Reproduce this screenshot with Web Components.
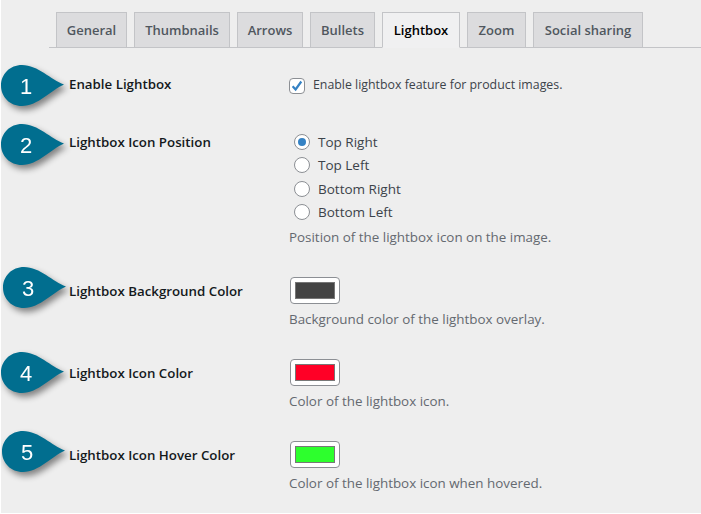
<!DOCTYPE html>
<html><head><meta charset="utf-8">
<style>
html,body{margin:0;padding:0;background:#fff}
body{width:701px;height:514px;overflow:hidden;font-family:"Open Sans","Noto Sans",sans-serif}
</style></head><body>
<settings-page>
  <tab-bar>
    <tab-item style="width:71px">General</tab-item><tab-item style="width:96px">Thumbnails</tab-item><tab-item style="width:66px">Arrows</tab-item><tab-item style="width:65px">Bullets</tab-item><tab-item active style="width:78px">Lightbox</tab-item><tab-item style="width:59px">Zoom</tab-item><tab-item style="width:110px">Social sharing</tab-item>
  </tab-bar>
  <setting-row label="Enable Lightbox" n="1" pin-x="1" pin-y="-9" style="height:58px">
    <check-field>Enable lightbox feature for product images.</check-field>
  </setting-row>
  <setting-row label="Lightbox Icon Position" n="2" pin-x="1" pin-y="-8" style="height:138px">
    <radio-list>
      <radio-field checked>Top Right</radio-field><radio-field>Top Left</radio-field><radio-field>Bottom Right</radio-field><radio-field>Bottom Left</radio-field>
    </radio-list>
    <field-desc style="margin-top:3.700px">Position of the lightbox icon on the image.</field-desc>
  </setting-row>
  <setting-row label="Lightbox Background Color" n="3" pin-x="3" pin-y="-3" style="height:82px" swatch-row>
    <color-swatch color="#444444"></color-swatch>
    <field-desc>Background color of the lightbox overlay.</field-desc>
  </setting-row>
  <setting-row label="Lightbox Icon Color" n="4" pin-x="1" pin-y="0" style="height:82px" swatch-row>
    <color-swatch color="#ff0026"></color-swatch>
    <field-desc>Color of the lightbox icon.</field-desc>
  </setting-row>
  <setting-row label="Lightbox Icon Hover Color" n="5" pin-x="2" pin-y="-3" style="height:72px" swatch-row>
    <color-swatch color="#2dff2d"></color-swatch>
    <field-desc>Color of the lightbox icon when hovered.</field-desc>
  </setting-row>
</settings-page>
<script>
function def(name, css, html){
  customElements.define(name, class extends HTMLElement{
    constructor(){super();const r=this.attachShadow({mode:'open'});r.innerHTML='<style>'+css+'</style>'+(typeof html==='function'?html(this):html);}
  });
}
def('settings-page',
 ':host{display:flex;flex-direction:column;box-sizing:border-box;width:700px;height:513px;margin-left:1px;background:#eeeeee;padding-top:12px;color:#1d2327}',
 '<slot></slot>');
def('tab-bar',
 ':host{display:flex;gap:7px;height:36px;box-sizing:border-box;margin-left:48px;padding-left:7px;border-bottom:1px solid #c3c4c7;margin-bottom:26px}',
 '<slot></slot>');
def('tab-item',
 ':host{display:flex;align-items:center;justify-content:center;box-sizing:border-box;height:36px;border:1px solid #c3c4c7;background:#dcdcde;color:#50575e;font-weight:600;font-size:13px}:host([active]){background:#f0f0f1;border-bottom-color:#f0f0f1;color:#000}',
 '<slot></slot>');
customElements.define('setting-row', class extends HTMLElement{
  constructor(){super();
    const r=this.attachShadow({mode:'open'});
    const n=this.getAttribute('n'),x=this.getAttribute('pin-x'),y=this.getAttribute('pin-y');
    const sw=this.hasAttribute('swatch-row');
    r.innerHTML=`<style>
    :host{display:grid;grid-template-columns:288px 1fr;position:relative;box-sizing:border-box}
    .label{padding-left:68px;font-weight:600;font-size:13.300px;line-height:20px;padding-top:${sw?11:0}px;color:#14191c}
    .field{display:flex;flex-direction:column;align-items:flex-start;padding-top:${sw?7:0}px}
    svg{position:absolute;left:${x-1}px;top:${y}px;overflow:visible;filter:drop-shadow(3px 4px 3px rgba(0,0,0,.45))}
    text{font:22px "Liberation Sans",Arial,sans-serif;fill:#fff}
    </style>
    <svg width="63" height="41" viewBox="0 0 63 41"><path fill="#016e8f" d="M63 19.500C50 15 37 0 21 0 9 0 0 9 0 20.500S9 41 21 41C37 41 50 25 63 19.500Z"/><text x="25" y="29" text-anchor="middle">${n}</text></svg>
    <div class="label">${this.getAttribute('label')}</div><div class="field"><slot></slot></div>`;
  }
});
def('check-field',
 ':host{display:flex;align-items:center;gap:8px;font-size:12.350px;line-height:20px;color:#3c434a}.b{box-sizing:border-box;width:16px;height:16px;border:1px solid #8c8f94;border-radius:4px;background:#fff;display:block;margin-top:2px}span{padding-top:1px}',
 '<svg class="b" viewBox="0 0 14 14"><path d="M2.600 7.300 5.600 10.500 11.300 2.500" fill="none" stroke="#3582c4" stroke-width="2.200"/></svg><span><slot></slot></span>');
def('radio-list',
 ':host{display:block;margin-top:-1.700px}',
 '<slot></slot>');
def('radio-field',
 ':host{display:flex;align-items:center;gap:8px;height:23.330px;padding-left:5px;font-size:13.500px;color:#3c434a;box-sizing:border-box}.r{box-sizing:border-box;width:16px;height:16px;border:1px solid #8c8f94;border-radius:50%;background:#fff;display:flex;align-items:center;justify-content:center}:host([checked]) .r::after{content:"";width:8px;height:8px;border-radius:50%;background:#3582c4}',
 '<span class="r"></span><span><slot></slot></span>');
def('field-desc',
 ':host{display:block;font-size:13.400px;line-height:20px;color:#646970}',
 '<slot></slot>');
def('color-swatch',
 ':host{display:block;box-sizing:border-box;width:50px;height:27px;border:1px solid #8c8f94;border-radius:4px;background:#fff;padding:4px;margin:0 0 5px 1px}i{display:block;height:100%;box-sizing:border-box;border:1px solid #777}',
 el=>`<i style="background:${el.getAttribute('color')}"></i>`);
</script>
</body></html>
